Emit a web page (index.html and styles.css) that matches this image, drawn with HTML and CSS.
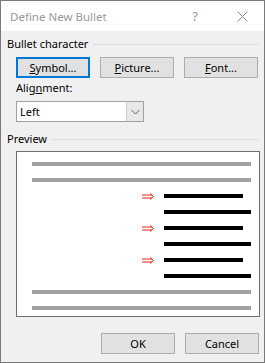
FILE: index.html
```html
<!DOCTYPE html>
<html>
<head>
<meta charset="utf-8">
<link rel="stylesheet" href="styles.css">
</head>
<body>
<div class="window">
  <div class="titlebar">
    <span class="title">Define New Bullet</span>
    <span class="help">?</span>
    <svg class="close" width="11" height="11" viewBox="0 0 11 11"><path d="M0.5 0.5 L10.5 10.5 M10.5 0.5 L0.5 10.5" stroke="#8a8a8a" stroke-width="1" fill="none"/></svg>
  </div>
  <div class="body">
    <div class="legend">Bullet character</div>
    <div class="btnrow">
      <button class="btn focused"><u>S</u>ymbol...</button>
      <button class="btn"><u>P</u>icture...</button>
      <button class="btn"><u>F</u>ont...</button>
    </div>
    <div class="label">Alig<u>n</u>ment:</div>
    <div class="select">
      <span class="seltext">Left</span>
      <span class="seldrop"><svg width="9" height="6" viewBox="0 0 9 6"><path d="M0.5 1 L4.5 5 L8.5 1" stroke="#606060" fill="none"/></svg></span>
    </div>
    <div class="legend preview-legend">Preview</div>
    <div class="preview">
      <div class="gl"></div>
      <div class="gl"></div>
      <div class="brow"><svg class="arrow" width="13" height="7" viewBox="0 0 13 7"><path d="M0 2 H10 M0 5 H10 M8 0.5 L11.5 3.5 L8 6.5" stroke="#e3241b" stroke-width="1" fill="none"/></svg><div class="bl short"></div></div>
      <div class="bl full"></div>
      <div class="brow"><svg class="arrow" width="13" height="7" viewBox="0 0 13 7"><path d="M0 2 H10 M0 5 H10 M8 0.5 L11.5 3.5 L8 6.5" stroke="#e3241b" stroke-width="1" fill="none"/></svg><div class="bl short"></div></div>
      <div class="bl full"></div>
      <div class="brow"><svg class="arrow" width="13" height="7" viewBox="0 0 13 7"><path d="M0 2 H10 M0 5 H10 M8 0.5 L11.5 3.5 L8 6.5" stroke="#e3241b" stroke-width="1" fill="none"/></svg><div class="bl short"></div></div>
      <div class="bl full"></div>
      <div class="gl"></div>
      <div class="gl"></div>
    </div>
    <div class="footer">
      <button class="btn">OK</button>
      <button class="btn">Cancel</button>
    </div>
  </div>
</div>
</body>
</html>
```
FILE: styles.css
```css
html, body {
  margin: 0;
  padding: 0;
  background: #ffffff;
}
body {
  width: 265px;
  height: 363px;
  font-family: "Noto Sans", "Open Sans", sans-serif;
  font-size: 11px;
  color: #000;
}
.window {
  box-sizing: border-box;
  width: 265px;
  height: 363px;
  border: 1px solid #7a7a7a;
  background: #f0f0f0;
  display: flex;
  flex-direction: column;
}
.titlebar {
  height: 30px;
  background: #ffffff;
  display: flex;
  align-items: center;
  padding-left: 9px;
}
.title {
  color: #999999;
  font-size: 11.5px;
  flex: 1;
}
.help {
  color: #999999;
  font-size: 13px;
  margin-right: 39px;
}
.close {
  margin-right: 16px;
}
.body {
  padding: 0 5px 0 6px;
  display: flex;
  flex-direction: column;
}
.legend {
  display: flex;
  align-items: center;
  height: 14px;
  line-height: 14px;
  margin-top: 6px;
}
.legend::after {
  content: "";
  flex: 1;
  height: 1px;
  background: #dcdcdc;
  margin-left: 5px;
}
.btnrow {
  display: flex;
  gap: 10px;
  margin: 6px 0 0 9px;
}
.btn {
  box-sizing: border-box;
  width: 74px;
  height: 21px;
  background: #e1e1e1;
  border: 1px solid #adadad;
  font-family: inherit;
  font-size: 11px;
  color: #000;
  padding: 0;
  line-height: 18px;
}
.btn.focused {
  border: 2px solid #0078d7;
}
.label {
  margin: 3px 0 0 9px;
  height: 14px;
  line-height: 14px;
}
.select {
  box-sizing: border-box;
  margin: 6px 0 0 9px;
  width: 128px;
  height: 21px;
  background: #fff;
  border: 1px solid #a0a0a0;
  display: flex;
}
.seltext {
  flex: 1;
  padding-left: 3px;
  line-height: 19px;
}
.seldrop {
  width: 16px;
  background: #e8e8e8;
  border-left: 1px solid #d0d0d0;
  display: flex;
  align-items: center;
  justify-content: center;
}
.preview-legend {
  margin-top: 10px;
}
.preview {
  box-sizing: border-box;
  margin: 5px 0 0 9px;
  width: 244px;
  height: 166px;
  background: #fff;
  border: 1px solid #6e6e6e;
  padding: 10px 0 6px 0;
  display: flex;
  flex-direction: column;
  gap: 12px;
}
.gl {
  height: 4px;
  width: 219px;
  margin-left: 15px;
  background: #a0a0a0;
}
.brow {
  height: 4px;
  display: flex;
  align-items: center;
  padding-left: 125px;
  gap: 9px;
}
.arrow {
  flex: none;
}
.bl {
  height: 4px;
  background: #000;
}
.bl.short {
  width: 79px;
}
.bl.full {
  width: 87px;
  margin-left: 147px;
}
.footer {
  display: flex;
  justify-content: flex-end;
  gap: 10px;
  margin-top: 16px;
  padding-right: 0;
}
```
